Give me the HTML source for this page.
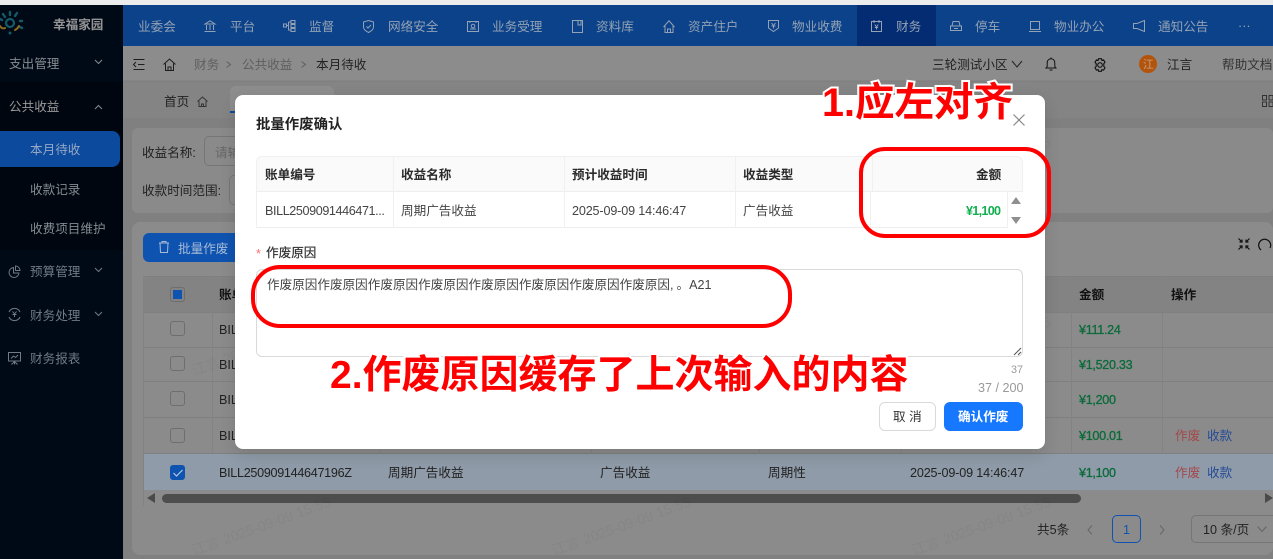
<!DOCTYPE html>
<html lang="zh"><head><meta charset="utf-8"><title>批量作废确认</title>
<style>
*{box-sizing:border-box}
html,body{margin:0;padding:0;overflow:hidden;height:559px}
body{width:1273px;height:559px;overflow:hidden;position:relative;background:#808080;font:12.6px/20px "Liberation Sans","Noto Sans CJK SC",sans-serif;color:#222}
.a{position:absolute}
.t{position:absolute;white-space:nowrap;line-height:20px;height:20px;margin-top:1px}
svg.i{position:absolute;fill:none;stroke:currentColor;stroke-width:1;overflow:visible}
.nav{color:#93a2b5}
.side{color:#858b90}
.dim{color:#6f7a84}
.wm{position:absolute;white-space:nowrap;font-size:14.4px;line-height:20px;color:rgba(0,0,0,.04);transform:rotate(-20deg);transform-origin:0 50%}
.cb{position:absolute;width:15px;height:15px;border:1px solid #6e6e6e;border-radius:3px;left:170px}
.vl{position:absolute;width:1px;background:#838383}
.hl{position:absolute;height:1px;background:#7f7f7f;left:143px;right:0}
.g{color:#0b6b3b;letter-spacing:-.3px;-webkit-text-stroke:.3px #0b6b3b}
.ml{position:absolute;width:1px;background:#f0f0f0}
.b{font-weight:700}
</style></head><body>
<div class="a" style="left:0;top:0;width:1273px;height:5px;background:#ececec"></div>
<!-- main background -->
<div class="a" style="left:123px;top:46px;width:1150px;height:35px;background:#8c8c8c;border-bottom:1px solid #858585"></div>
<div class="a" style="left:123px;top:82px;width:1150px;height:36px;background:#848484"></div>
<div class="a" style="left:132px;top:128px;width:1141px;height:85px;background:#8a8a8a;border-radius:6px"></div>
<div class="a" style="left:132px;top:222px;width:1141px;height:333px;background:#8b8b8b;border-radius:8px"></div>
<!-- header -->
<div class="a" style="left:123px;top:5px;width:1150px;height:41px;background:#0c4289"></div>
<div class="a" style="left:857px;top:5px;width:79px;height:41px;background:#032c72"></div>
<div class="nav">
<span class="t" style="left:138px;top:16px">业委会</span>
<svg class="i" style="left:204px;top:20px" width="12" height="12" viewBox="0 0 12 12"><path d="M1 4 6 .8 11 4H1ZM2.500 5v5M6 5v5M9.500 5v5M.5 11.500h11"/></svg>
<span class="t" style="left:230px;top:16px">平台</span>
<svg class="i" style="left:283px;top:20px" width="13" height="12" viewBox="0 0 13 12"><rect x=".5" y="4" width="3" height="3"/><rect x="8" y=".5" width="4" height="3"/><rect x="8" y="4.500" width="4" height="3"/><rect x="8" y="8.500" width="4" height="3"/><path d="M3.500 5.500h2M5.500 2v8h2.500M5.500 2h2.500"/></svg>
<span class="t" style="left:309px;top:16px">监督</span>
<svg class="i" style="left:363px;top:20px" width="11" height="13" viewBox="0 0 11 13"><path d="M5.500.5 10.500 2v5c0 3-3 4.500-5 5.500C3.500 11.500.5 10 .5 7V2Z"/><path d="M3.500 6.500l1.500 1.500 3-3"/></svg>
<span class="t" style="left:388px;top:16px">网络安全</span>
<svg class="i" style="left:467px;top:21px" width="12" height="11" viewBox="0 0 12 11"><path d="M.5.500h11v10H.5ZM3 .5V2M9 .5V2M3 8h6"/><circle cx="6" cy="5" r="1.800"/></svg>
<span class="t" style="left:492px;top:16px">业务受理</span>
<svg class="i" style="left:572px;top:20px" width="11" height="13" viewBox="0 0 11 13"><path d="M.5.500h10v12H.5ZM6 .5v4.500h3V.5"/></svg>
<span class="t" style="left:596px;top:16px">资料库</span>
<svg class="i" style="left:663px;top:20px" width="12" height="13" viewBox="0 0 12 13"><path d="M.5 7 6 .8 11.500 7M2 6v6.500h8V6M4.500 12.500V9h3v3.500"/></svg>
<span class="t" style="left:688px;top:16px">资产住户</span>
<svg class="i" style="left:768px;top:20px" width="11" height="12" viewBox="0 0 11 12"><path d="M.5.500h10V8l-5 3.500L.5 8ZM3.500 3 5.500 5.500 7.500 3M3.500 6h4M5.500 5.500V8.500"/></svg>
<span class="t" style="left:792px;top:16px">物业收费</span>
<svg class="i" style="left:871px;top:20px" width="11" height="12" viewBox="0 0 11 12"><path d="M.5 1.500h10v10H.5ZM3 0v3M8 0v3M3.800 4.500 5.500 7l1.700-2.500M3.800 7.500h3.400M5.500 7v2.500"/></svg>
<span class="t" style="left:896px;top:16px">财务</span>
<svg class="i" style="left:950px;top:21px" width="12" height="11" viewBox="0 0 12 11"><path d="M2 5 3 .5h6L10 5M.5 5h11v4.500H.5ZM4 7.500h4"/></svg>
<span class="t" style="left:975px;top:16px">停车</span>
<svg class="i" style="left:1029px;top:21px" width="12" height="11" viewBox="0 0 12 11"><path d="M1.500.5h9v8h-9ZM0 10.500h12"/></svg>
<span class="t" style="left:1054px;top:16px">物业办公</span>
<svg class="i" style="left:1133px;top:20px" width="12" height="12" viewBox="0 0 12 12"><path d="M11.500.5v11L4 8.500H.5v-5H4Z"/></svg>
<span class="t" style="left:1158px;top:16px">通知公告</span>
<span class="t" style="left:1238px;top:15px">···</span>
</div>
<!-- sidebar -->
<div class="a" style="left:0;top:5px;width:123px;height:554px;background:#000a17"></div>
<div class="a" style="left:0;top:82px;width:123px;height:168px;background:#00060f"></div>
<svg class="a" style="left:0;top:9px" width="26" height="28" viewBox="0 0 26 28" fill="none" stroke-linecap="round">
<circle cx="10" cy="14" r="4" stroke="#145a68" stroke-width="2.200"/>
<path d="M3 5l2 3M10 3v3M17 4l-2 3M20 12h2M20 18l2 1" stroke="#145a68" stroke-width="2.400"/>
<path d="M0 10l2 1" stroke="#145a68" stroke-width="2.400"/>
<path d="M0 17c1 2 3 3 5 2M15 21c2-1 3-2 4-4" stroke="#8a6a20" stroke-width="2"/>
<circle cx="10" cy="24" r="1.500" fill="#145a68"/>
</svg>
<span class="t b" style="left:53px;top:14px;color:#949494;font-size:12.6px">幸福家园</span>
<div class="side">
<span class="t" style="left:9px;top:53px">支出管理</span>
<svg class="i" style="left:94px;top:59px" width="9" height="6" viewBox="0 0 9 6"><path d="M1 1 4.500 4.500 8 1"/></svg>
<span class="t" style="left:9px;top:96px;color:#999">公共收益</span>
<svg class="i" style="left:94px;top:104px" width="9" height="6" viewBox="0 0 9 6"><path d="M1 5 4.500 1.500 8 5"/></svg>
<div class="a" style="left:0;top:131px;width:120px;height:36px;background:#0c4a9e;border-radius:0 8px 8px 0"></div>
<span class="t" style="left:30px;top:139px;color:#97a9c4">本月待收</span>
<span class="t" style="left:30px;top:179px">收款记录</span>
<span class="t" style="left:30px;top:218px">收费项目维护</span>
<div class="dim">
<svg class="i" style="left:8px;top:265px" width="13" height="13" viewBox="0 0 13 13"><path d="M5.500 2.500A5 5 0 1 0 11 8H5.500Z"/><path d="M7.500 1A4.500 4.500 0 0 1 12 5.500H7.500Z"/></svg>
<span class="t" style="left:30px;top:261px">预算管理</span>
<svg class="i" style="left:94px;top:267px" width="9" height="6" viewBox="0 0 9 6"><path d="M1 1 4.500 4.500 8 1"/></svg>
<svg class="i" style="left:8px;top:308px" width="13" height="13" viewBox="0 0 13 13"><path d="M1 4A6 6 0 0 1 12 4M12 9A6 6 0 0 1 1 9M4.500 3.500 6.500 6 8.500 3.500M4.500 6.500h4M6.500 6v3"/></svg>
<span class="t" style="left:30px;top:305px">财务处理</span>
<svg class="i" style="left:94px;top:311px" width="9" height="6" viewBox="0 0 9 6"><path d="M1 1 4.500 4.500 8 1"/></svg>
<svg class="i" style="left:8px;top:352px" width="13" height="13" viewBox="0 0 13 13"><path d="M.5.500h12v8.500H.5ZM6.500 9v3.500M3.500 12.500l3-3 3 3M3 6.500 5.500 4 7.500 5.500 10 3"/></svg>
<span class="t" style="left:30px;top:348px">财务报表</span>
</div>
</div>
<!-- breadcrumb -->
<svg class="i" style="left:133px;top:59px;color:#1d1d1d" width="12" height="11" viewBox="0 0 12 11"><path d="M.5.500h11M5 5.500h6.500M.5 10.500h11M3 3 .5 5.500 3 8"/></svg>
<svg class="i" style="left:163px;top:58px;color:#1d1d1d" width="13" height="13" viewBox="0 0 13 13"><path d="M.5 6.500 6.500 1l6 5.500M2.500 5.500v7h8v-7M5 12.500V9h3v3.500"/></svg>
<span class="t" style="left:194px;top:54px;color:#5f5f5f">财务</span>
<svg class="i" style="left:226px;top:61px;color:#5f5f5f" width="5" height="7" viewBox="0 0 5 7"><path d="M.5.500 4.500 3.500 .5 6.500"/></svg>
<span class="t" style="left:242px;top:54px;color:#5f5f5f">公共收益</span>
<svg class="i" style="left:301px;top:61px;color:#5f5f5f" width="5" height="7" viewBox="0 0 5 7"><path d="M.5.500 4.500 3.500 .5 6.500"/></svg>
<span class="t" style="left:316px;top:54px;color:#222">本月待收</span>
<span class="t" style="left:932px;top:54px;color:#222">三轮测试小区</span>
<svg class="i" style="left:1011px;top:60px;color:#222" width="12" height="8" viewBox="0 0 12 8"><path d="M1 1 6 7 11 1"/></svg>
<svg class="i" style="left:1045px;top:57px;color:#111" width="12" height="14" viewBox="0 0 12 14"><path d="M1 11h10L9.800 9.500V5.500a3.800 3.800 0 0 0-7.600 0v4ZM4.500 13h3M6 .5v1.200"/></svg>
<svg class="i" style="left:1093px;top:58px;color:#111;stroke-width:1.100" width="14" height="14" viewBox="0 0 14 14"><path d="M5.600.7h2.800l.5 1.700 1.700-.5 1.400 2.400-1.200 1.300v2.800l1.200 1.300-1.400 2.400-1.700-.5-.5 1.700H5.600l-.5-1.700-1.700.5L2 9.700l1.200-1.300V5.600L2 4.300l1.400-2.400 1.700.5Z"/><circle cx="7" cy="7" r="2.300"/></svg>
<div class="a" style="left:1139px;top:55px;width:18px;height:18px;border-radius:50%;background:#b3540c"></div>
<span class="t" style="left:1143px;top:54px;color:#c9a080;font-size:10.800px">江</span>
<span class="t" style="left:1167px;top:54px;color:#222">江言</span>
<span class="t" style="left:1222px;top:54px;color:#333">帮助文档</span>
<!-- tabs -->
<span class="t" style="left:164px;top:91px;color:#222">首页</span>
<svg class="i" style="left:197px;top:96px;color:#333" width="11" height="11" viewBox="0 0 11 11"><path d="M.5 5.500 5.500 1l5 4.500M2 5v5.500h7V5M4.500 10.500V8h2v2.500"/></svg>
<div class="a" style="left:230px;top:86px;width:104px;height:27px;background:#8d8d8d;border-radius:6px 6px 0 0;border-bottom:2px solid #0c4a9e"></div>
<svg class="i" style="left:1262px;top:95px;color:#333" width="11" height="12" viewBox="0 0 11 12"><path d="M.5.500h4v4.500h-4ZM7 .5h4v4.500H7ZM.5 7h4v4.500h-4ZM7 7h4v4.500H7Z"/></svg>
<!-- filter -->
<span class="t" style="left:142px;top:142px;color:#222">收益名称:</span>
<div class="a" style="left:204px;top:136px;width:60px;height:30px;border:1px solid #767676;border-radius:5px"></div>
<span class="t" style="left:215px;top:142px;color:#666">请输</span>
<span class="t" style="left:142px;top:180px;color:#222">收款时间范围:</span>
<div class="a" style="left:229px;top:175px;width:40px;height:30px;border:1px solid #767676;border-radius:5px"></div>
<!-- toolbar -->
<div class="a" style="left:143px;top:233px;width:110px;height:29px;background:#0f53b0;border-radius:6px"></div>
<svg class="i" style="left:159px;top:241px;color:#a8bbd6" width="10" height="12" viewBox="0 0 10 12"><path d="M0 2h10M3 2V.5h4V2M1 2l.5 9.500h7L9 2"/></svg>
<span class="t" style="left:178px;top:238px;color:#a8bbd6">批量作废</span>
<svg class="i" style="left:1238px;top:238px;color:#111;stroke-width:1.200" width="12" height="12" viewBox="0 0 12 12"><path d="M.5.500 4 4M4 1.500V4H1.500M11.500.5 8 4M8 1.500V4h2.500M.5 11.500 4 8M4 10.500V8H1.500M11.500 11.500 8 8M8 10.500V8h2.500"/></svg>
<svg class="i" style="left:1258px;top:238px;color:#111;stroke-width:1.200" width="14" height="13" viewBox="0 0 14 13"><path d="M3 12A6 6 0 1 1 12 10"/></svg>
<!-- main table -->
<div class="a" style="left:143px;top:276px;width:1130px;height:36px;background:#838383;border-radius:6px 0 0 0"></div>
<div class="a" style="left:143px;top:454px;width:1130px;height:36px;background:#8f9ba8"></div>
<div class="hl" style="top:276px"></div><div class="hl" style="top:312px"></div><div class="hl" style="top:347px"></div><div class="hl" style="top:381px"></div><div class="hl" style="top:417px"></div><div class="hl" style="top:453px"></div>
<div class="vl" style="left:143px;top:276px;height:230px"></div>
<div class="vl" style="left:212px;top:276px;height:178px"></div>
<div class="vl" style="left:380px;top:276px;height:178px"></div>
<div class="vl" style="left:591px;top:276px;height:178px"></div>
<div class="vl" style="left:759px;top:276px;height:178px"></div>
<div class="vl" style="left:901px;top:276px;height:178px"></div>
<div class="vl" style="left:1071px;top:276px;height:178px"></div>
<div class="vl" style="left:1162px;top:276px;height:178px"></div>
<div class="cb" style="top:287px"></div><div class="a" style="left:173px;top:290px;width:9px;height:9px;background:#0f53b0"></div>
<div class="cb" style="top:321px"></div><div class="cb" style="top:356px"></div><div class="cb" style="top:391px"></div><div class="cb" style="top:428px"></div>
<div class="cb" style="top:465px;background:#0f53b0;border-color:#0f53b0"></div>
<svg class="i" style="left:173px;top:469px;color:#b5c6dd;stroke-width:1.200" width="10" height="8" viewBox="0 0 10 8"><path d="M.5 4 3.500 7 9.500 1"/></svg>
<span class="t b" style="left:219px;top:284px;color:#111">账单</span>
<span class="t" style="left:219px;top:319px;color:#222">BILL</span>
<span class="t" style="left:219px;top:354px;color:#222">BILL</span>
<span class="t" style="left:219px;top:389px;color:#222">BILL</span>
<span class="t" style="left:219px;top:425px;color:#222">BILL</span>
<span class="t" style="left:219px;top:462px;color:#222;letter-spacing:-.3px">BILL250909144647196Z</span>
<span class="t" style="left:388px;top:462px;color:#222">周期广告收益</span>
<span class="t" style="left:600px;top:462px;color:#222">广告收益</span>
<span class="t" style="left:768px;top:462px;color:#222">周期性</span>
<span class="t" style="left:910px;top:462px;color:#222;letter-spacing:-.15px">2025-09-09 14:46:47</span>
<span class="t b" style="left:1079px;top:284px;color:#111">金额</span>
<span class="t b" style="left:1171px;top:284px;color:#111">操作</span>
<span class="t g" style="left:1079px;top:319px">¥111.24</span>
<span class="t g" style="left:1079px;top:354px">¥1,520.33</span>
<span class="t g" style="left:1079px;top:389px">¥1,200</span>
<span class="t g" style="left:1079px;top:425px">¥100.01</span>
<span class="t g" style="left:1079px;top:462px">¥1,100</span>
<span class="t" style="left:1175px;top:425px;color:#a4484a">作废</span><span class="t" style="left:1207px;top:425px;color:#254c98">收款</span>
<span class="t" style="left:1175px;top:462px;color:#a4484a">作废</span><span class="t" style="left:1207px;top:462px;color:#254c98">收款</span>
<svg class="a" style="left:147px;top:493px" width="9" height="10"><path d="M8 0v10L0 5Z" fill="#4a4a4a"/></svg>
<div class="a" style="left:162px;top:494px;width:919px;height:9px;background:#4d4d4d;border-radius:5px"></div>
<svg class="a" style="left:1265px;top:493px" width="8" height="10"><path d="M0 0v10L8 5Z" fill="#4a4a4a"/></svg>
<!-- pagination -->
<span class="t" style="left:1037px;top:519px;color:#222">共5条</span>
<svg class="i" style="left:1087px;top:525px;color:#666" width="6" height="10" viewBox="0 0 6 10"><path d="M5 .5 1 5 5 9.500"/></svg>
<div class="a" style="left:1112px;top:515px;width:29px;height:28px;border:1px solid #0f53b0;border-radius:5px"></div>
<span class="t" style="left:1123px;top:519px;color:#0f53b0">1</span>
<svg class="i" style="left:1159px;top:525px;color:#666" width="6" height="10" viewBox="0 0 6 10"><path d="M1 .5 5 5 1 9.500"/></svg>
<div class="a" style="left:1191px;top:515px;width:90px;height:28px;border:1px solid #757575;border-radius:5px"></div>
<span class="t" style="left:1203px;top:519px;color:#222">10 条/页</span>
<svg class="i" style="left:1257px;top:526px;color:#666" width="10" height="6" viewBox="0 0 10 6"><path d="M.5.500 5 5.500 9.500.5"/></svg>
<!-- watermarks -->
<span class="wm" style="left:193px;top:542px">江言 2025-09-09 15:55</span>
<span class="wm" style="left:553px;top:542px">江言 2025-09-09 15:55</span>
<span class="wm" style="left:913px;top:542px">江言 2025-09-09 15:55</span>
<span class="wm" style="left:193px;top:362px">江言 2025-09-09 15:55</span>
<span class="wm" style="left:913px;top:362px">江言 2025-09-09 15:55</span>
<span class="wm" style="left:913px;top:182px">江言 2025-09-09 15:55</span>
<!-- modal -->
<div class="a" style="left:235px;top:95px;width:810px;height:354px;background:#fff;border-radius:8px;box-shadow:0 6px 16px rgba(0,0,0,.12)"></div>
<span class="t b" style="left:256px;top:114px;font-size:14.400px;color:#222">批量作废确认</span>
<svg class="i" style="left:1013px;top:114px;color:#8a8a8a;stroke-width:1.200" width="12" height="12" viewBox="0 0 12 12"><path d="M.5.500 11.500 11.500M11.500.5 .5 11.500"/></svg>
<div class="a" style="left:256px;top:156px;width:767px;height:36px;background:#fafafa;border:1px solid #f0f0f0;border-bottom:1px solid #eee;border-radius:6px 6px 0 0"></div>
<div class="a" style="left:256px;top:227px;width:752px;height:1px;background:#eee"></div>
<div class="ml" style="left:256px;top:191px;height:37px"></div>
<div class="ml" style="left:393px;top:156px;height:72px"></div>
<div class="ml" style="left:564px;top:156px;height:72px"></div>
<div class="ml" style="left:735px;top:156px;height:72px"></div>
<div class="ml" style="left:872px;top:156px;height:35px"></div>
<div class="ml" style="left:870px;top:191px;height:37px"></div>
<div class="ml" style="left:1007px;top:191px;height:37px"></div>
<span class="t b" style="left:265px;top:164px;color:#2a2a2a">账单编号</span>
<span class="t b" style="left:401px;top:164px;color:#2a2a2a">收益名称</span>
<span class="t b" style="left:572px;top:164px;color:#2a2a2a">预计收益时间</span>
<span class="t b" style="left:743px;top:164px;color:#2a2a2a">收益类型</span>
<span class="t b" style="left:976px;top:164px;color:#2a2a2a">金额</span>
<span class="t" style="left:265px;top:200px;color:#444;letter-spacing:-.4px">BILL2509091446471...</span>
<span class="t" style="left:401px;top:200px;color:#444">周期广告收益</span>
<span class="t" style="left:572px;top:200px;color:#444;letter-spacing:-.15px">2025-09-09 14:46:47</span>
<span class="t" style="left:743px;top:200px;color:#444">广告收益</span>
<span class="t b" style="left:966px;top:200px;color:#10b04e;letter-spacing:-.7px">¥1,100</span>
<svg class="a" style="left:1011px;top:197px" width="10" height="28"><path d="M0 7 5 0l5 7ZM0 20h10l-5 7Z" fill="#8f8f8f"/></svg>
<span class="t" style="left:256px;top:243px;color:#ff6b6b">*</span>
<span class="t" style="left:266px;top:242px;color:#333;-webkit-text-stroke:.2px #333">作废原因</span>
<div class="a" style="left:256px;top:269px;width:767px;height:88px;border:1px solid #d9d9d9;border-radius:6px"></div>
<span class="t" style="left:267px;top:274px;color:#444">作废原因作废原因作废原因作废原因作废原因作废原因作废原因作废原因<span style="letter-spacing:3px">,</span>。A21</span>
<svg class="a" style="left:1013px;top:347px" width="9" height="9"><path d="M1 8 8 1M5 8 8 5" stroke="#555" stroke-width="1"/></svg>
<span class="t" style="left:1011px;top:359px;color:#999;font-size:10.800px">37</span>
<span class="t" style="left:978px;top:377px;color:#999">37 / 200</span>
<div class="a" style="left:879px;top:402px;width:57px;height:29px;border:1px solid #d9d9d9;border-radius:6px;background:#fff"></div>
<span class="t" style="left:893px;top:406px;color:#333">取 消</span>
<div class="a" style="left:944px;top:402px;width:79px;height:29px;background:#1677ff;border-radius:6px"></div>
<span class="t b" style="left:958px;top:406px;color:#fff">确认作废</span>
<!-- annotations -->
<svg class="a" style="left:0;top:0" width="1273" height="559" fill="none" stroke="#fe0000" stroke-width="4">
<rect x="861" y="149" width="188" height="87" rx="24"/>
<rect x="253" y="267" width="537" height="59" rx="27"/>
</svg>
<span class="a" style="left:822px;top:79px;white-space:nowrap;font-size:39.500px;line-height:48px;font-weight:700;color:#fe0000;-webkit-text-stroke:4px #fff;paint-order:stroke fill">1.应左对齐</span>
<span class="a" style="left:330px;top:352px;white-space:nowrap;font-size:39px;line-height:48px;font-weight:700;color:#fe0000;-webkit-text-stroke:4px #fff;paint-order:stroke fill">2.作废原因缓存了上次输入的内容</span>
</body></html>
